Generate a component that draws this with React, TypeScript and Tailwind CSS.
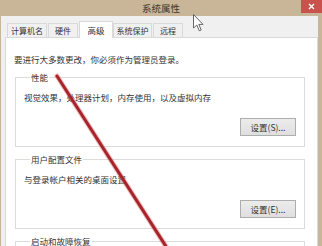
import React from "react";

const tabs = [
  { label: "计算机名", w: "w-[40px]" },
  { label: "硬件", w: "w-[30px]" },
  { label: "高级", w: "w-[34px]", active: true },
  { label: "系统保护", w: "w-[39px]" },
  { label: "远程", w: "w-[30px]" },
];

function GroupBox({
  title,
  text,
  button,
}: {
  title: string;
  text?: string;
  button?: string;
}) {
  return (
    <fieldset className="border border-[#dcdcdc] ml-[9px] mr-[12px] px-[8px] pt-[8px] pb-[10px] mt-[6px] min-w-0">
      <legend className="ml-[6px] px-[1px] text-[8.5px] leading-[12px] text-[#333]">{title}</legend>
      {text && <div className="text-[8.5px] leading-[12px] text-[#333]">{text}</div>}
      {button && (
        <div className="flex justify-end mt-[15px]">
          <button className="w-[56px] h-[18px] border border-[#adadad] bg-gradient-to-b from-[#ececec] to-[#dfdfdf] text-[8.5px] leading-none text-[#333] flex items-center justify-center">
            {button}
          </button>
        </div>
      )}
    </fieldset>
  );
}

export default function App() {
  return (
    <div
      className="relative w-[322px] h-[246px] overflow-hidden bg-[#c9b598] flex flex-col"
      style={{ fontFamily: '"Noto Sans CJK SC", "Noto Sans", sans-serif' }}
    >
      {/* title bar */}
      <div className="h-[16px] shrink-0 flex items-center justify-center text-[9.5px] text-[#40372b]">
        系统属性
      </div>
      <div className="absolute right-0 top-0 w-[21px] h-[13px] bg-[#c9524c] flex items-center justify-center">
        <svg width="7" height="7" viewBox="0 0 7 7">
          <path d="M1 1L6 6M6 1L1 6" stroke="#fff" strokeWidth="1.3" />
        </svg>
      </div>

      {/* dialog body */}
      <div className="flex-1 ml-[1px] mr-[4px] bg-[#f0f0f0] flex flex-col pt-[5px]">
        <div className="flex items-end h-[16px] pl-[6px]">
          {tabs.map((t) =>
            t.active ? (
              <div
                key={t.label}
                className={`${t.w} h-[17px] -mb-px relative z-10 bg-white border border-b-0 border-[#d9d9d9] flex items-center justify-center text-[8.5px] text-[#333]`}
              >
                {t.label}
              </div>
            ) : (
              <div
                key={t.label}
                className={`${t.w} h-[14px] mr-[1px] bg-[#f0f0f0] border border-b-0 border-[#d9d9d9] flex items-center justify-center text-[8px] text-[#333]`}
              >
                {t.label}
              </div>
            )
          )}
        </div>
        <div className="flex-1 ml-[4px] bg-white border border-[#d9d9d9] pt-[15px]">
          <div className="pl-[8px] text-[8.5px] leading-[12px] text-[#333]">
            要进行大多数更改，你必须作为管理员登录。
          </div>
          <GroupBox title="性能" text="视觉效果，处理器计划，内存使用，以及虚拟内存" button="设置(S)..." />
          <GroupBox title="用户配置文件" text="与登录帐户相关的桌面设置" button="设置(E)..." />
          <GroupBox title="启动和故障恢复" />
        </div>
      </div>

      {/* mouse pointer */}
      <svg className="absolute left-[193px] top-[14px]" width="11" height="18" viewBox="0 0 11 18">
        <path d="M0.5 0.5L0.5 14L3.8 11L6.3 16.8L8.2 16L5.8 10.4L10 10.4Z" fill="#fff" stroke="#555" strokeWidth="0.9" strokeLinejoin="round" />
      </svg>

      {/* red annotation line */}
      <svg className="absolute inset-0 pointer-events-none" width="322" height="246" viewBox="0 0 322 246">
        <line x1="57" y1="76" x2="167" y2="248" stroke="#d77a7a" strokeOpacity="0.5" strokeWidth="5" strokeLinecap="round" />
        <line x1="57" y1="76" x2="167" y2="248" stroke="#a8242a" strokeWidth="3" strokeLinecap="round" />
      </svg>
    </div>
  );
}
